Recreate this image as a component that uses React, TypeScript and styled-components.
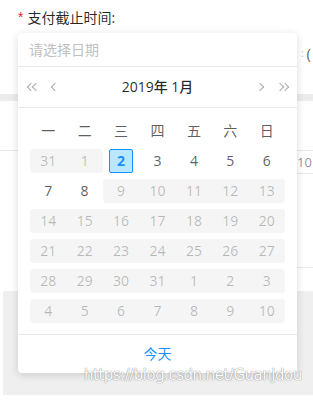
import React from 'react'
import styled, { createGlobalStyle } from 'styled-components';

const GlobalStyle = createGlobalStyle`
  html, body {
    margin: 0;
    padding: 0;
    background: #fff;
  }
  body {
    font-family: "Open Sans", "Noto Sans CJK SC", sans-serif;
    font-size: 14px;
    color: rgba(0, 0, 0, 0.65);
  }
  * {
    box-sizing: border-box;
  }
`;

const Page = styled.div`
  position: relative;
  width: 313px;
  height: 402px;
  overflow: hidden;
`;

const LabelRow = styled.div`
  height: 34px;
  display: flex;
  align-items: center;
  padding-left: 18px;
  color: rgba(0, 0, 0, 0.85);
  font-size: 14px;
`;

const Required = styled.span`
  color: #f5222d;
  margin-right: 4px;
  font-family: SimSun, "Liberation Sans", sans-serif;
`;

const FieldRow = styled.div`
  height: 38px;
  display: flex;
  justify-content: flex-end;
  align-items: center;
  gap: 3px;
  color: rgba(0, 0, 0, 0.65);
`;

const Hint = styled.span`
  font-size: 10px;
  color: #bbb;
`;

const Paren = styled.span`
  font-size: 15px;
  margin-right: 2px;
`;

const Band = styled.div`
  margin-top: 22px;
  height: 7px;
  background: #ececec;
`;

const TableArea = styled.div`
  margin-top: 49px;
  border-top: 1px solid #e8e8e8;
`;

const TableRow = styled.div<{ $h: number }>`
  height: ${p => p.$h}px;
  display: flex;
  align-items: center;
  justify-content: flex-start;
  padding-left: 1px;
  border-bottom: 1px solid #e8e8e8;
  margin-left: 296px;
  color: rgba(0, 0, 0, 0.45);
  font-size: 13px;
`;

const Gap = styled.div<{ $h: number }>`
  height: ${p => p.$h}px;
`;

const GreyFooter = styled.div`
  margin-left: 3px;
  height: 104px;
  background: #efefef;
`;

const Picker = styled.div`
  position: absolute;
  top: 33px;
  left: 18px;
  width: 279px;
  background: #fff;
  border-radius: 4px;
  box-shadow: 0 2px 8px rgba(0, 0, 0, 0.15);
  font-size: 14px;
  line-height: 1.5;
`;

const InputWrap = styled.div`
  height: 34px;
  padding: 6px 11px;
  border-bottom: 1px solid #e8e8e8;
  color: #bfbfbf;
  line-height: 22px;
`;

const Header = styled.div`
  position: relative;
  height: 41px;
  line-height: 40px;
  text-align: center;
  border-bottom: 1px solid #e8e8e8;
  color: rgba(0, 0, 0, 0.85);
  font-weight: 500;
`;

const Nav = styled.span<{ $left?: number; $right?: number; $double?: boolean }>`
  position: absolute;
  top: 0;
  ${p => (p.$left !== undefined ? `left: ${p.$left}px;` : `right: ${p.$right}px;`)}
  width: ${p => (p.$double ? 12 : 8)}px;
  height: 40px;
  display: flex;
  align-items: center;
  justify-content: center;
`;

const Chevron = styled.i<{ $dir: 'left' | 'right' }>`
  display: inline-block;
  width: 6px;
  height: 6px;
  border: 0 solid #aaa;
  border-width: 1.2px 0 0 1.2px;
  transform: rotate(${p => (p.$dir === 'left' ? -45 : 135)}deg);
  & + & {
    margin-left: -1px;
  }
`;

const Body = styled.div`
  padding: 8px 12px;
`;

const Table = styled.table`
  width: 100%;
  border-collapse: collapse;
  border-spacing: 0;
  table-layout: fixed;
`;

const WeekHead = styled.th`
  padding: 6px 0;
  line-height: 18px;
  font-weight: normal;
  text-align: center;
  color: rgba(0, 0, 0, 0.65);
`;

const Cell = styled.td`
  padding: 3px 0;
  text-align: center;
`;

const DateBox = styled.div<{ $disabled?: boolean; $first?: boolean; $last?: boolean; $selected?: boolean }>`
  height: 24px;
  line-height: 22px;
  margin: 0 auto;
  border: 1px solid transparent;
  border-radius: 2px;
  width: 24px;
  color: rgba(0, 0, 0, 0.65);
  ${p =>
    p.$disabled &&
    `
    width: auto;
    color: rgba(0, 0, 0, 0.25);
    background: #f5f5f5;
    border-radius: ${p.$first ? '4px' : '0'} ${p.$last ? '4px 4px' : '0 0'} ${p.$first ? '4px' : '0'};
  `}
  ${p =>
    p.$selected &&
    `
    background: #bae7ff;
    border-color: #1890ff;
    color: #1890ff;
    font-weight: bold;
  `}
`;

const Footer = styled.div`
  border-top: 1px solid #e8e8e8;
  line-height: 38px;
  text-align: center;
  color: #1890ff;
`;

const Watermark = styled.div`
  position: absolute;
  left: 84px;
  top: 366px;
  font-family: "DejaVu Sans", sans-serif;
  font-size: 15px;
  letter-spacing: -0.5px;
  color: #fff;
  text-shadow: 0 0 1px #888, 0 0 1px #888;
  opacity: 0.9;
`;

const weekDays = ['一', '二', '三', '四', '五', '六', '日'];

type Day = { n: number; disabled?: boolean; selected?: boolean };

const d = (n: number): Day => ({ n, disabled: true });
const e = (n: number): Day => ({ n });

const rows: Day[][] = [
    [d(31), d(1), { n: 2, selected: true }, e(3), e(4), e(5), e(6)],
    [e(7), e(8), d(9), d(10), d(11), d(12), d(13)],
    [14, 15, 16, 17, 18, 19, 20].map(d),
    [21, 22, 23, 24, 25, 26, 27].map(d),
    [28, 29, 30, 31, 1, 2, 3].map(d),
    [4, 5, 6, 7, 8, 9, 10].map(d),
];

function App() {
    return (
        <Page>
            <GlobalStyle />
            <LabelRow>
                <Required>*</Required>支付截止时间:
            </LabelRow>
            <FieldRow>
                <Hint>:</Hint>
                <Paren>(</Paren>
            </FieldRow>
            <Band />
            <TableArea>
                <TableRow $h={23}>10</TableRow>
                <TableRow $h={94} />
                <Gap $h={23} />
            </TableArea>
            <GreyFooter />

            <Picker>
                <InputWrap>请选择日期</InputWrap>
                <Header>
                    <Nav $left={9} $double>
                        <Chevron $dir="left" />
                        <Chevron $dir="left" />
                    </Nav>
                    <Nav $left={33}>
                        <Chevron $dir="left" />
                    </Nav>
                    2019年 1月
                    <Nav $right={33}>
                        <Chevron $dir="right" />
                    </Nav>
                    <Nav $right={9} $double>
                        <Chevron $dir="right" />
                        <Chevron $dir="right" />
                    </Nav>
                </Header>
                <Body>
                    <Table>
                        <thead>
                            <tr>
                                {weekDays.map(w => (
                                    <WeekHead key={w}>{w}</WeekHead>
                                ))}
                            </tr>
                        </thead>
                        <tbody>
                            {rows.map((row, ri) => (
                                <tr key={ri}>
                                    {row.map((day, ci) => (
                                        <Cell key={ci}>
                                            <DateBox
                                                $disabled={day.disabled}
                                                $selected={day.selected}
                                                $first={day.disabled && !row[ci - 1]?.disabled}
                                                $last={day.disabled && !row[ci + 1]?.disabled}
                                            >
                                                {day.n}
                                            </DateBox>
                                        </Cell>
                                    ))}
                                </tr>
                            ))}
                        </tbody>
                    </Table>
                </Body>
                <Footer>今天</Footer>
            </Picker>
            <Watermark>https://blog.csdn.net/Guanjdou</Watermark>
        </Page>
    )
}

export default App
